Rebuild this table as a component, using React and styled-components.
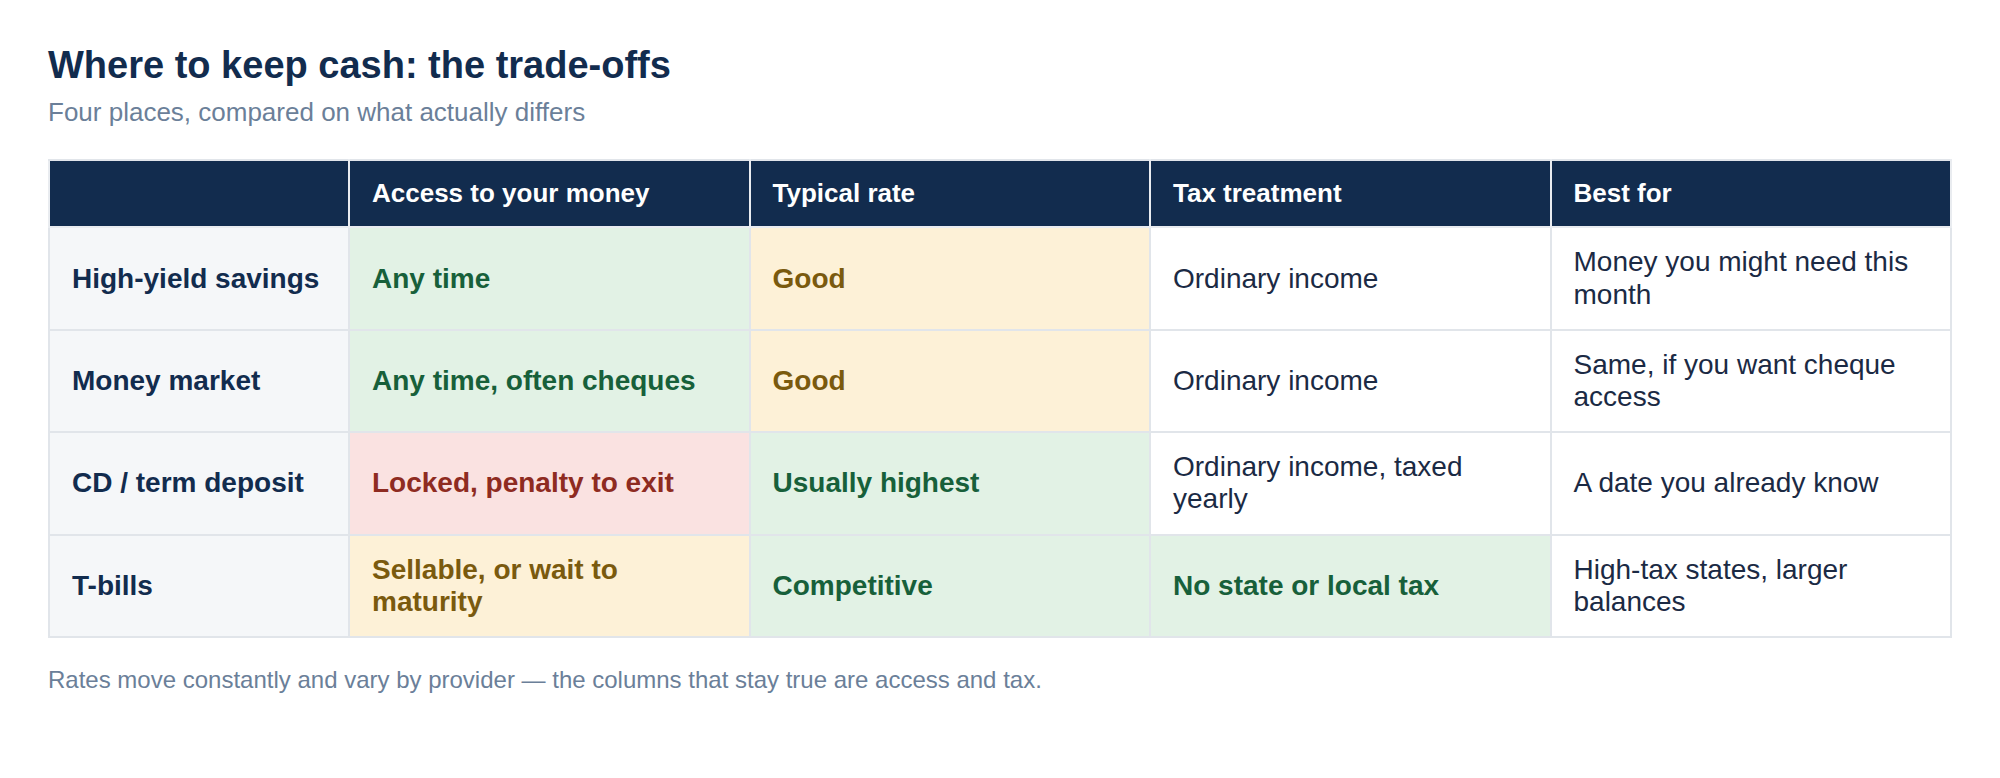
import styled, { createGlobalStyle } from "styled-components";

const GlobalStyle = createGlobalStyle`
    html, body {
        margin: 0;
        padding: 0;
        background: #ffffff;
    }
    body {
        font-family: "Liberation Sans", Arial, sans-serif;
    }
`;

const Page = styled.div`
    padding: 44px 48px 40px;
`;

const Title = styled.h1`
    margin: 0;
    font-size: 38px;
    font-weight: 700;
    line-height: 1.15;
    color: #122c4e;
`;

const Subtitle = styled.p`
    margin: 10px 0 0;
    font-size: 26px;
    line-height: 1.15;
    color: #6b7f99;
`;

const Table = styled.table`
    width: 100%;
    margin-top: 31px;
    border-collapse: collapse;
    table-layout: fixed;
    border: 2px solid #e1e5ea;
`;

const HeadCell = styled.th`
    background: #122c4e;
    color: #ffffff;
    font-size: 26px;
    font-weight: 700;
    text-align: left;
    line-height: 1.15;
    padding: 18px 22px;
    border: 2px solid #e9ecf0;
    border-top-color: #e1e5ea;
    width: ${(p) => (p.$narrow ? "254px" : "auto")};
`;

const tones = {
    good: { bg: "#e2f2e5", fg: "#17603a" },
    mid: { bg: "#fdf1d7", fg: "#7a5a0e" },
    bad: { bg: "#fae2e1", fg: "#8e2b21" },
};

const Cell = styled.td`
    font-size: 28px;
    line-height: 1.15;
    padding: 18px 22px;
    vertical-align: middle;
    border: 2px solid #e1e5ea;
    background: ${(p) => (p.$tone ? tones[p.$tone].bg : "#ffffff")};
    color: ${(p) => (p.$tone ? tones[p.$tone].fg : "#1b2a44")};
    font-weight: ${(p) => (p.$tone ? 700 : 400)};
`;

const LabelCell = styled.th`
    font-size: 28px;
    line-height: 1.15;
    font-weight: 700;
    text-align: left;
    padding: 18px 22px;
    background: #f5f7f9;
    color: #122c4e;
    border: 2px solid #e1e5ea;
`;

const Note = styled.p`
    margin: 28px 0 0;
    font-size: 24px;
    line-height: 1.15;
    color: #6b7f99;
`;

const headers = ["Access to your money", "Typical rate", "Tax treatment", "Best for"];

const rows = [
    {
        label: "High-yield savings",
        cells: [
            ["Any time", "good"],
            ["Good", "mid"],
            ["Ordinary income"],
            ["Money you might need this month"],
        ],
    },
    {
        label: "Money market",
        cells: [
            ["Any time, often cheques", "good"],
            ["Good", "mid"],
            ["Ordinary income"],
            ["Same, if you want cheque access"],
        ],
    },
    {
        label: "CD / term deposit",
        cells: [
            ["Locked, penalty to exit", "bad"],
            ["Usually highest", "good"],
            ["Ordinary income, taxed yearly"],
            ["A date you already know"],
        ],
    },
    {
        label: "T-bills",
        cells: [
            ["Sellable, or wait to maturity", "mid"],
            ["Competitive", "good"],
            ["No state or local tax", "good"],
            ["High-tax states, larger balances"],
        ],
    },
];

export default function App() {
    return (
        <Page>
            <GlobalStyle />
            <Title>Where to keep cash: the trade-offs</Title>
            <Subtitle>Four places, compared on what actually differs</Subtitle>
            <Table>
                <thead>
                    <tr>
                        <HeadCell $narrow />
                        {headers.map((h) => (
                            <HeadCell key={h}>{h}</HeadCell>
                        ))}
                    </tr>
                </thead>
                <tbody>
                    {rows.map((row) => (
                        <tr key={row.label}>
                            <LabelCell scope="row">{row.label}</LabelCell>
                            {row.cells.map(([text, tone]) => (
                                <Cell key={text} $tone={tone}>
                                    {text}
                                </Cell>
                            ))}
                        </tr>
                    ))}
                </tbody>
            </Table>
            <Note>Rates move constantly and vary by provider — the columns that stay true are access and tax.</Note>
        </Page>
    );
}
